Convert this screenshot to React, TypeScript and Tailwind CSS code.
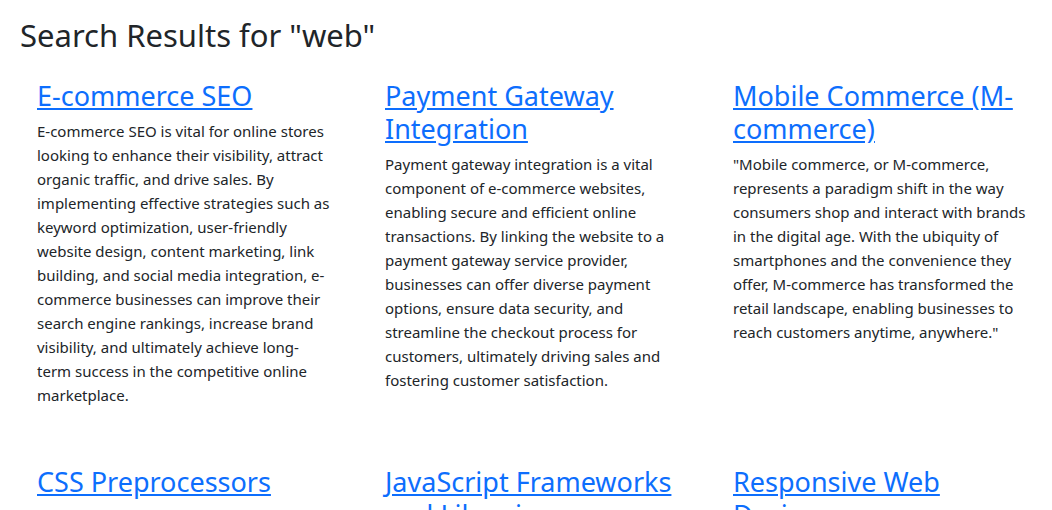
const results = [
  {
    id: 1,
    title: "E-commerce SEO",
    textW: "w-[294px]",
    body: "E-commerce SEO is vital for online stores looking to enhance their visibility, attract organic traffic, and drive sales. By implementing effective strategies such as keyword optimization, user-friendly website design, content marketing, link building, and social media integration, e-commerce businesses can improve their search engine rankings, increase brand visibility, and ultimately achieve long-term success in the competitive online marketplace.",
  },
  {
    id: 2,
    title: "Payment Gateway Integration",
    textW: "w-[290px]",
    body: "Payment gateway integration is a vital component of e-commerce websites, enabling secure and efficient online transactions. By linking the website to a payment gateway service provider, businesses can offer diverse payment options, ensure data security, and streamline the checkout process for customers, ultimately driving sales and fostering customer satisfaction.",
  },
  {
    id: 3,
    title: "Mobile Commerce (M-commerce)",
    textW: "w-[296px]",
    body: "\"Mobile commerce, or M-commerce, represents a paradigm shift in the way consumers shop and interact with brands in the digital age. With the ubiquity of smartphones and the convenience they offer, M-commerce has transformed the retail landscape, enabling businesses to reach customers anytime, anywhere.\"",
  },
  {
    id: 4,
    title: "CSS Preprocessors",
    textW: "w-[290px]",
    body: "CSS preprocessors such as Sass and Less extend the capabilities of plain CSS with variables, nesting, mixins and functions, making stylesheets easier to write, organize and maintain across large web projects.",
  },
  {
    id: 5,
    title: "JavaScript Frameworks and Libraries",
    textW: "w-[290px]",
    body: "JavaScript frameworks and libraries like React, Angular and Vue give developers reusable building blocks for creating fast, interactive and maintainable web applications.",
  },
  {
    id: 6,
    title: "Responsive Web Design",
    textW: "w-[290px]",
    body: "Responsive web design ensures that websites adapt seamlessly to different screen sizes and devices, providing an optimal viewing experience for every visitor.",
  },
];

export default function App() {
  return (
    <main className="min-h-screen bg-white text-[#212529] font-['Noto_Sans',sans-serif]">
      <div className="pt-[17px] pl-5">
        <h2 className="text-[31px] leading-[37px] font-normal">Search Results for "web"</h2>
      </div>

      {/* Results */}
      <div className="mt-[25px] pl-[37px] grid grid-cols-[290px_290px_290px] gap-x-[58px] gap-y-[58px]">
        {results.map((r) => (
          <div key={r.id}>
            <h3 className="w-[290px] text-[27px] leading-[33px] font-normal mb-[7px]">
              <a href="#" className="text-[#0d6efd] underline">
                {r.title}
              </a>
            </h3>
            <p className={`${r.textW} text-[15px] leading-6`}>{r.body}</p>
          </div>
        ))}
      </div>
    </main>
  );
}
